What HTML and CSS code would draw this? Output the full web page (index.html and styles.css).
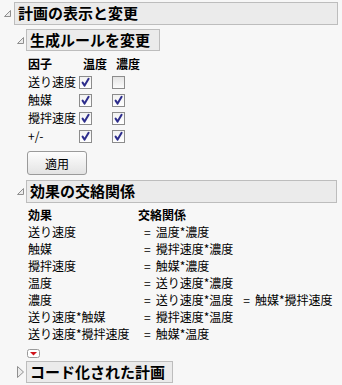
FILE: index.html
```html
<!DOCTYPE html>
<html lang="ja">
<head>
<meta charset="utf-8">
<link rel="stylesheet" href="styles.css">
</head>
<body>
<div class="outline">
  <div class="head head-l1">
    <svg class="tri" width="7" height="7" viewBox="0 0 7 7"><polygon points="6.5,0.5 6.5,6.5 0.5,6.5" /></svg>
    <div class="title title-wide">計画の表示と変更</div>
  </div>

  <div class="head head-l2">
    <svg class="tri" width="7" height="7" viewBox="0 0 7 7"><polygon points="6.5,0.5 6.5,6.5 0.5,6.5" /></svg>
    <div class="title">生成ルールを変更</div>
  </div>

  <div class="rules">
    <div class="rh">因子</div><div class="rh ch">温度</div><div class="rh ch">濃度</div>

    <div class="rl">送り速度</div>
    <div class="cb"><span class="box on"><svg width="11" height="11" viewBox="0 0 11 11"><path d="M2.6 5.6 L4.6 8.6 L8.6 1.8"/></svg></span></div>
    <div class="cb"><span class="box"></span></div>

    <div class="rl">触媒</div>
    <div class="cb"><span class="box on"><svg width="11" height="11" viewBox="0 0 11 11"><path d="M2.6 5.6 L4.6 8.6 L8.6 1.8"/></svg></span></div>
    <div class="cb"><span class="box on"><svg width="11" height="11" viewBox="0 0 11 11"><path d="M2.6 5.6 L4.6 8.6 L8.6 1.8"/></svg></span></div>

    <div class="rl">攪拌速度</div>
    <div class="cb"><span class="box on"><svg width="11" height="11" viewBox="0 0 11 11"><path d="M2.6 5.6 L4.6 8.6 L8.6 1.8"/></svg></span></div>
    <div class="cb"><span class="box on"><svg width="11" height="11" viewBox="0 0 11 11"><path d="M2.6 5.6 L4.6 8.6 L8.6 1.8"/></svg></span></div>

    <div class="rl">+/-</div>
    <div class="cb"><span class="box on"><svg width="11" height="11" viewBox="0 0 11 11"><path d="M2.6 5.6 L4.6 8.6 L8.6 1.8"/></svg></span></div>
    <div class="cb"><span class="box on"><svg width="11" height="11" viewBox="0 0 11 11"><path d="M2.6 5.6 L4.6 8.6 L8.6 1.8"/></svg></span></div>
  </div>

  <button class="apply">適用</button>

  <div class="head head-l2 head-eff">
    <svg class="tri" width="7" height="7" viewBox="0 0 7 7"><polygon points="6.5,0.5 6.5,6.5 0.5,6.5" /></svg>
    <div class="title title-wide2">効果の交絡関係</div>
  </div>

  <div class="effects">
    <div class="eh">効果</div><div class="eh ev">交絡関係</div>
    <div>送り速度</div><div class="ev"><span class="eq">=</span>温度*濃度</div>
    <div>触媒</div><div class="ev"><span class="eq">=</span>攪拌速度*濃度</div>
    <div>攪拌速度</div><div class="ev"><span class="eq">=</span>触媒*濃度</div>
    <div>温度</div><div class="ev"><span class="eq">=</span>送り速度*濃度</div>
    <div>濃度</div><div class="ev"><span class="eq">=</span>送り速度*温度<span class="eq eq2">=</span>触媒*攪拌速度</div>
    <div>送り速度*触媒</div><div class="ev"><span class="eq">=</span>攪拌速度*温度</div>
    <div>送り速度*攪拌速度</div><div class="ev"><span class="eq">=</span>触媒*温度</div>
  </div>

  <div class="redbtn"><svg width="13" height="9" viewBox="0 0 13 9"><rect x="0.5" y="0.5" width="12" height="8" rx="2" fill="#fff" stroke="#9a9a9a"/><polygon points="3,3 10,3 6.5,6.5" fill="#d0141c"/></svg></div>

  <div class="head head-l2 head-coded">
    <svg class="tri-r" width="7" height="12" viewBox="0 0 7 12"><polygon points="0.5,0.5 6.5,6 0.5,11.5" /></svg>
    <div class="title">コード化された計画</div>
  </div>
</div>
</body>
</html>
```

FILE: styles.css
```css
html, body {
  margin: 0;
  padding: 0;
  background: #f7f7f7;
}
body {
  font-family: "Noto Sans CJK JP", "Noto Sans", sans-serif;
  font-size: 12px;
  color: #000;
}
.outline {
  padding-top: 2px;
}
.head {
  display: flex;
  align-items: center;
}
.tri polygon, .tri-r polygon {
  fill: #ececec;
  stroke: #8f8f8f;
  stroke-width: 1;
}
.title {
  box-sizing: border-box;
  height: 23px;
  border: 1px solid #bdbdbd;
  background: #ebebeb;
  font-weight: bold;
  font-size: 15px;
  line-height: 20px;
  padding: 0 9px 0 3px;
  white-space: nowrap;
}
.head-l1 .tri {
  margin-left: 4px;
  margin-right: 3px;
}
.title-wide {
  flex: 1;
  margin-right: 4px;
}
.head-l2 {
  margin-top: 4px;
}
.head-l2 .tri, .head-l2 .tri-r {
  margin-left: 17px;
  margin-right: 2px;
}
.head-l2 .title {
  height: 22px;
  line-height: 19px;
}
.head-eff {
  margin-top: 5px;
}
.head-eff .title {
  height: 23px;
  line-height: 20px;
}
.title-wide2 {
  flex: 1;
  margin-right: 5px;
}
.head-coded {
  margin-top: 3px;
}
.head-coded .title {
  padding-right: 7px;
}

.rules {
  display: grid;
  grid-template-columns: 51px 33px 40px;
  grid-auto-rows: 18px;
  margin: 4px 0 0 28px;
  align-items: center;
  line-height: 18px;
}
.rh {
  font-weight: bold;
}
.ch {
  padding-left: 4px;
}
.cb {
  display: flex;
  align-items: center;
}
.box {
  box-sizing: border-box;
  width: 13px;
  height: 13px;
  border: 1px solid #8c8c8c;
  background: linear-gradient(#e4e4e4, #fbfbfb);
  display: flex;
  align-items: center;
  justify-content: center;
}
.box.on {
  background: linear-gradient(#f2f2f2, #ffffff);
}
.box svg path {
  fill: none;
  stroke: #2d2d8c;
  stroke-width: 2;
  stroke-linecap: round;
  stroke-linejoin: round;
}

.apply {
  display: block;
  box-sizing: border-box;
  width: 60px;
  height: 24px;
  margin: 6px 0 0 27px;
  padding: 0;
  border: 1px solid #9a9a9a;
  border-radius: 3px;
  background: linear-gradient(#fdfdfd, #e3e3e3);
  font-family: inherit;
  font-size: 12px;
  color: #000;
}

.effects {
  display: grid;
  grid-template-columns: 110px auto;
  grid-auto-rows: 17px;
  line-height: 17px;
  margin: 3px 0 0 28px;
  white-space: nowrap;
}
.eh {
  font-weight: bold;
}
.ev {
  padding-left: 0;
}
.ev .eq {
  display: inline-block;
  margin: 0 5px 0 6px;
}
.eh.ev {
  padding-left: 0;
}
.ev .eq2 {
  margin-left: 10px;
}
.redbtn {
  margin: 7px 0 0 27px;
  height: 9px;
  line-height: 0;
}
```
